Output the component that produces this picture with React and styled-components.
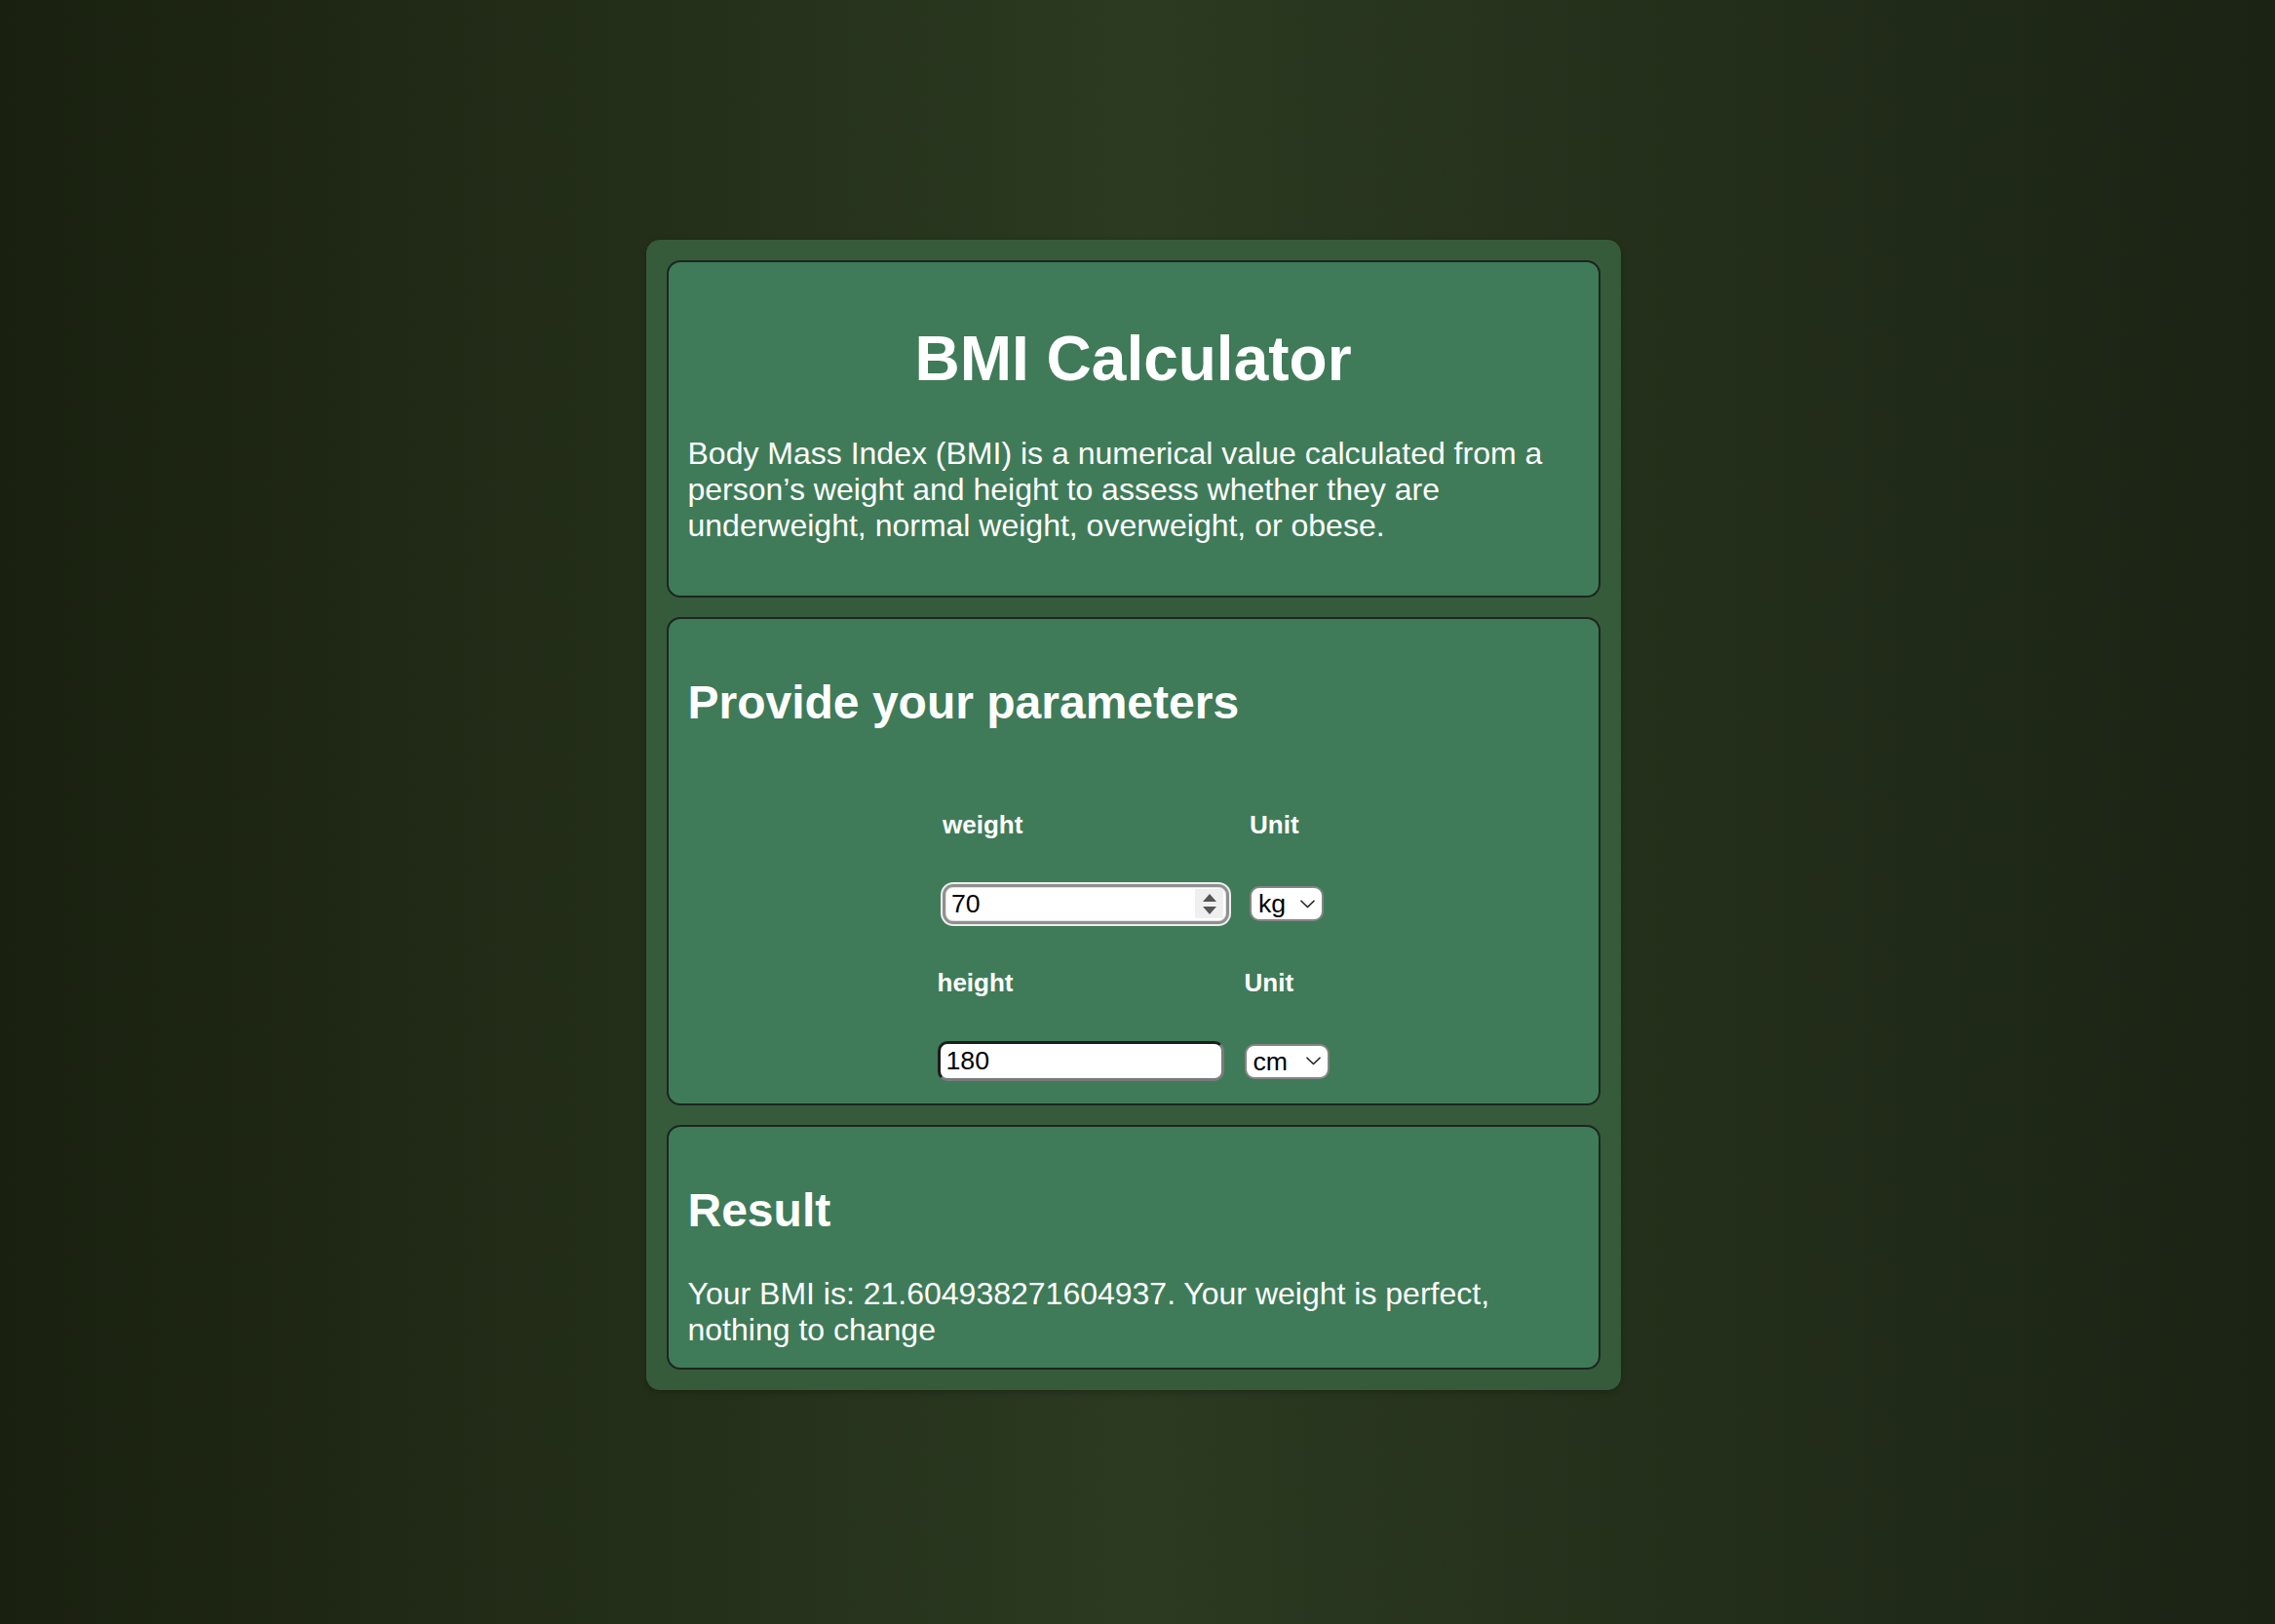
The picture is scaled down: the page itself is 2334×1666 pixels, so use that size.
import React, { useState } from 'react';
import styled, { createGlobalStyle, css } from 'styled-components';

const GlobalStyle = createGlobalStyle`
  html, body {
    margin: 0;
    padding: 0;
  }
  body {
    min-height: 100vh;
    font-family: "Liberation Sans", Arial, Helvetica, sans-serif;
    background: linear-gradient(90deg, #19200f 0%, #2c3a21 50%, #1b2314 100%);
    color: #ffffff;
  }
`;

const Page = styled.div`
  min-height: 100vh;
  box-sizing: border-box;
  padding: 6px 9px 0 0;
  display: flex;
  justify-content: center;
  align-items: center;
`;

const Container = styled.main`
  width: 1000px;
  box-sizing: border-box;
  padding: 21px;
  display: flex;
  flex-direction: column;
  gap: 20px;
  background: #355b3b;
  border-radius: 14px;
  box-shadow: 0 2px 6px rgba(0, 0, 0, 0.25);
`;

const Section = styled.section`
  background: #3f7b58;
  border: 2px solid #1d2520;
  border-radius: 14px;
  padding: 20px;
`;

const Title = styled.h1`
  margin: 42px 0;
  font-size: 64px;
  line-height: 74px;
  font-weight: 700;
  text-align: center;
`;

const Intro = styled.p`
  margin: 1px 0 34px;
  font-size: 32px;
  line-height: 36.8px;
`;

const Heading = styled.h2`
  margin: 38px 0 40px;
  font-size: 48px;
  line-height: 55px;
  font-weight: 700;
`;

const Form = styled.form`
  margin: 83px 0 3px;
  display: flex;
  flex-direction: column;
  gap: 45px;
`;

const FieldGroup = styled.div`
  display: grid;
  grid-template-columns: auto auto;
  column-gap: 21px;
  row-gap: 45.5px;
  justify-content: center;
  align-items: center;
`;

const Label = styled.label`
  font-size: 26px;
  line-height: 30px;
  font-weight: 700;
`;

const InputBox = styled.div`
  width: 294px;
  height: 41px;
  box-sizing: border-box;
  display: flex;
  align-items: center;
  padding: 0 3px 0 6px;
  background: #ffffff;
  border: 3px solid;
  border-color: #1d1d1d #7b7b7b #7b7b7b #1d1d1d;
  border-radius: 10px;
  ${({ $focused }) => $focused && css`
    border-color: #8f8f8f;
    border-radius: 11px;
    box-shadow: 0 0 0 2px #eeeeee, inset 0 0 0 1px #e4e4e4;
  `}
`;

const Field = styled.input`
  flex: 1;
  min-width: 0;
  border: none;
  outline: none;
  padding: 0;
  background: transparent;
  font-family: "Liberation Sans", Arial, sans-serif;
  font-size: 26.67px;
  color: #000000;
`;

const Spinner = styled.span`
  width: 29px;
  height: 30px;
  display: flex;
  flex-direction: column;
  align-items: center;
  justify-content: center;
  gap: 5px;
  background: #efefef;
`;

const SelectBox = styled.div`
  width: ${({ $width }) => $width}px;
  height: 36px;
  box-sizing: border-box;
  display: flex;
  align-items: center;
  padding-right: 7px;
  background: #ffffff;
  border: 2px solid #858585;
  border-radius: 10px;
`;

const Select = styled.select`
  flex: 1;
  min-width: 0;
  appearance: none;
  border: none;
  outline: none;
  background: transparent;
  padding: 0 0 0 7px;
  font-family: "Liberation Sans", Arial, sans-serif;
  font-size: 26.67px;
  color: #000000;
`;

const ResultText = styled.div`
  font-size: 32px;
  line-height: 36.8px;
`;

const Chevron = () => (
  <svg width="15" height="9" viewBox="0 0 15 9" aria-hidden="true">
    <path d="M1 1.2 L7.5 7.5 L14 1.2" fill="none" stroke="#222" strokeWidth="1.6" strokeLinecap="round" strokeLinejoin="round" />
  </svg>
);

const Arrows = () => (
  <Spinner>
    <svg width="14" height="8" viewBox="0 0 14 8" aria-hidden="true">
      <polygon points="0,8 7,0 14,8" fill="#555" />
    </svg>
    <svg width="14" height="8" viewBox="0 0 14 8" aria-hidden="true">
      <polygon points="0,0 14,0 7,8" fill="#555" />
    </svg>
  </Spinner>
);

function verdict(bmi) {
  if (bmi < 18.5) return 'You are underweight, eat a bit more';
  if (bmi < 25) return 'Your weight is perfect, nothing to change';
  if (bmi < 30) return 'You are overweight, move a bit more';
  return 'You are obese, consider seeing a doctor';
}

export default function App() {
  const [weight, setWeight] = useState('70');
  const [weightUnit, setWeightUnit] = useState('kg');
  const [height, setHeight] = useState('180');
  const [heightUnit, setHeightUnit] = useState('cm');

  const kg = weightUnit === 'kg' ? Number(weight) : Number(weight) * 0.45359237;
  const cm = heightUnit === 'cm' ? Number(height) : Number(height) * 2.54;
  const bmi = (kg * 10000) / (cm * cm);
  const resultLine = `Your BMI is: ${bmi}. ${verdict(bmi)}`;

  return (
    <Page>
      <GlobalStyle />
      <Container>
        <Section>
          <Title>BMI Calculator</Title>
          <Intro>
            Body Mass Index (BMI) is a numerical value calculated from a person’s weight and height to assess whether they are underweight, normal weight, overweight, or obese.
          </Intro>
        </Section>

        <Section>
          <Heading>Provide your parameters</Heading>
          <Form onSubmit={(e) => e.preventDefault()}>
            <FieldGroup>
              <Label htmlFor="weight">weight</Label>
              <Label htmlFor="weightUnit">Unit</Label>
              <InputBox $focused>
                <Field id="weight" value={weight} onChange={(e) => setWeight(e.target.value)} />
                <Arrows />
              </InputBox>
              <SelectBox $width={76}>
                <Select id="weightUnit" value={weightUnit} onChange={(e) => setWeightUnit(e.target.value)}>
                  <option value="kg">kg</option>
                  <option value="lb">lb</option>
                </Select>
                <Chevron />
              </SelectBox>
            </FieldGroup>
            <FieldGroup>
              <Label htmlFor="height">height</Label>
              <Label htmlFor="heightUnit">Unit</Label>
              <InputBox>
                <Field id="height" value={height} onChange={(e) => setHeight(e.target.value)} />
              </InputBox>
              <SelectBox $width={87}>
                <Select id="heightUnit" value={heightUnit} onChange={(e) => setHeightUnit(e.target.value)}>
                  <option value="cm">cm</option>
                  <option value="in">in</option>
                </Select>
                <Chevron />
              </SelectBox>
            </FieldGroup>
          </Form>
        </Section>

        <Section>
          <Heading>Result</Heading>
          <ResultText>{resultLine}</ResultText>
        </Section>
      </Container>
    </Page>
  );
}
